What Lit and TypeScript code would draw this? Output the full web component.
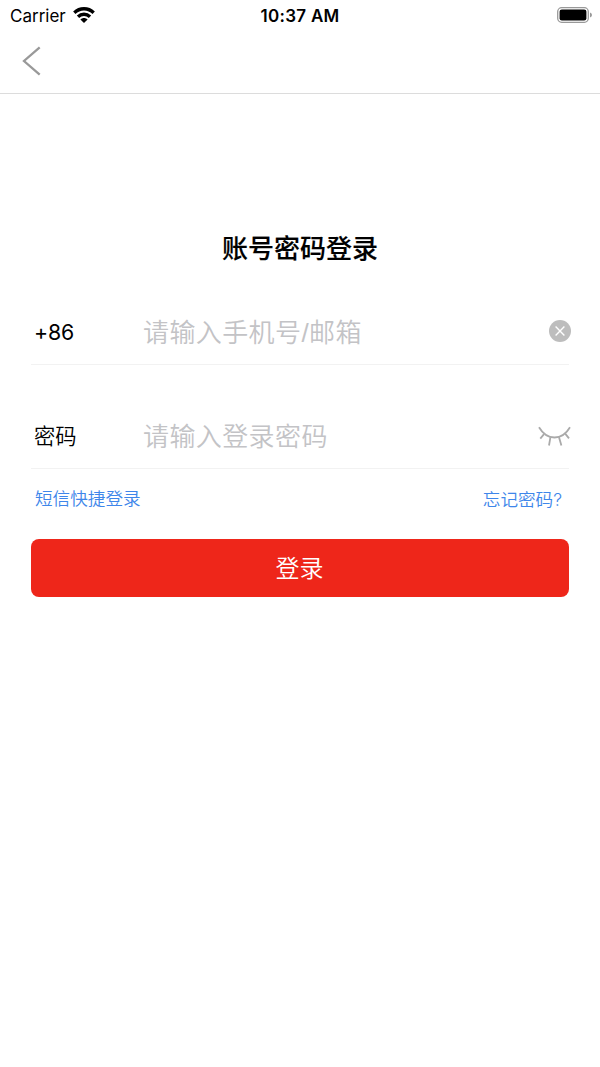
import { LitElement, html, css } from "lit";
import { customElement } from "lit/decorators.js";

@customElement("status-bar")
class StatusBar extends LitElement {
  static styles = css`
    :host {
      display: grid;
      grid-template-columns: 1fr auto 1fr;
      align-items: center;
      height: 30px;
      padding: 0 8px 0 10px;
      font-size: 17px;
      line-height: 30px;
    }
    .left { display: flex; align-items: center; gap: 7px; }
    .carrier { padding-top: 1px; }
    .left svg { margin-bottom: 1px; }
    .time { padding: 1px 2px 0 0; font-weight: 600; letter-spacing: 0.3px; }
    .battery { justify-self: end; margin-bottom: 2px; }
    svg { display: block; }
  `;
  render() {
    return html`
      <div class="left">
        <span class="carrier">Carrier</span>
        <svg width="22" height="18" viewBox="0 0 22 18">
          <g fill="none" stroke="#000" stroke-width="3.3">
            <path d="M1.3 6.7C6.8 1.4 15.2 1.4 20.7 6.7" />
            <path d="M5 10.7C8.4 7.4 13.6 7.4 17 10.7" />
          </g>
          <path d="M7.4 13.4C9.5 11.4 12.5 11.4 14.6 13.4L11 17Z" />
        </svg>
      </div>
      <span class="time">10:37 AM</span>
      <svg class="battery" width="35" height="16" viewBox="0 0 35 16">
        <rect x="0.7" y="0.7" width="30.6" height="14.6" rx="4" fill="none" stroke="#999" stroke-width="1.3" />
        <rect x="2.6" y="2.6" width="26.8" height="10.8" rx="2.2" />
        <path d="M33 5.5Q35 6.2 35 8T33 10.5Z" fill="#999" />
      </svg>
    `;
  }
}

@customElement("app-root")
class AppRoot extends LitElement {
  static styles = css`
    :host {
      display: block;
      min-height: 1067px;
      background: #fff;
      color: #000;
      font-family: Inter, "Noto Sans CJK SC", sans-serif;
      white-space: nowrap;
    }
    svg { display: block; flex: none; }
    .nav {
      display: flex;
      align-items: center;
      box-sizing: border-box;
      height: 64px;
      padding: 0 22px 1px;
      border-bottom: 1px solid #dcdcdc;
    }
    .form { padding: 135px 31px 0; }
    .title {
      margin: 0;
      font-size: 26px;
      line-height: 40px;
      font-weight: 500;
      -webkit-text-stroke: 0.15px #000;
      text-align: center;
    }
    .row {
      display: flex;
      align-items: center;
      box-sizing: border-box;
      border-bottom: 1px solid #f2f2f2;
    }
    .phone { height: 66px; margin-top: 30px; }
    .password { height: 66px; margin-top: 38px; }
    .label {
      flex: none;
      width: 109px;
      padding: 0 0 2px 3px;
      font-size: 21.3px;
      font-weight: 350;
    }
    .code { padding-bottom: 0; font-size: 21.3px; font-weight: 400; letter-spacing: -0.1px; }
    .placeholder {
      flex: 1;
      padding-top: 3px;
      color: #c3c3c6;
      font-family: "Liberation Sans", "Noto Sans CJK SC", sans-serif;
      font-size: 26px;
      font-weight: 350;
      letter-spacing: 0.4px;
      line-height: 40px;
    }
    .action { margin-right: -2px; }
    .phone .action { margin-bottom: 1px; }
    .links {
      display: flex;
      justify-content: space-between;
      box-sizing: border-box;
      height: 70.4px;
      padding: 17px 7px 0 4px;
      color: #3e86ea;
      font-size: 17.6px;
      font-weight: 350;
      line-height: 26px;
    }
    .forgot { padding-top: 1px; }
    .submit {
      display: block;
      width: 100%;
      height: 58px;
      padding: 0 1px 2px 0;
      border: 0;
      border-radius: 8px;
      background: #ee261a;
      color: #fff;
      font: 350 24px/56px "Noto Sans CJK SC", sans-serif;
    }
  `;
  render() {
    return html`
      <status-bar></status-bar>
      <div class="nav">
        <svg width="20" height="32" viewBox="0 0 20 32">
          <path d="M17.7 2.3L2 16L17.7 29.7" fill="none" stroke="#999" stroke-width="2.3" />
        </svg>
      </div>
      <main class="form">
        <h1 class="title">账号密码登录</h1>
        <div class="row phone">
          <span class="label code">+86</span>
          <span class="placeholder">请输入手机号/邮箱</span>
          <svg class="action" width="22" height="22" viewBox="0 0 22 22">
            <circle cx="11" cy="11" r="11" fill="#bdbdbd" />
            <path d="M6.6 6.6L15.4 15.4M15.4 6.6L6.6 15.4" stroke="#fff" stroke-width="1.4" />
          </svg>
        </div>
        <div class="row password">
          <span class="label">密码</span>
          <span class="placeholder">请输入登录密码</span>
          <svg class="action" width="33" height="22" viewBox="0 0 33 22">
            <g fill="none" stroke="#aaa" stroke-width="1.8">
              <path d="M1 2.3C9 15.9 24 15.9 32 2.3" />
              <path d="M6 9.2L2.3 13.6M12.4 12.3L11 20.5M21 12.2L23.4 20.5M27.2 8.6L31 13.4" />
            </g>
          </svg>
        </div>
        <div class="links">
          <span>短信快捷登录</span>
          <span class="forgot">忘记密码?</span>
        </div>
        <button class="submit">登录</button>
      </main>
    `;
  }
}
